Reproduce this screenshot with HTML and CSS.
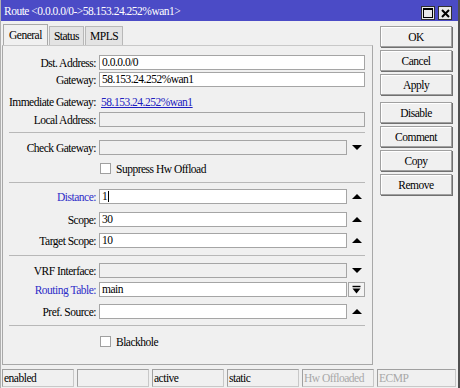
FILE: index.html
```html
<!DOCTYPE html>
<html lang="en">
<head>
  <meta charset="UTF-8" />
  <title>Route</title>
  <link rel="stylesheet" href="styles.css">
</head>
<body>
<div class="window">
  <div class="titlebar">
    <span class="title">Route &lt;0.0.0.0/0-&gt;58.153.24.252%wan1&gt;</span>
    <span class="tb-btns">
      <span class="tb-btn"><span class="max-box"></span></span>
      <span class="tb-btn close">
        <svg width="9" height="9" viewBox="0 0 9 9"><path d="M1 1L8 8M8 1L1 8" stroke="#000" stroke-width="2"/></svg>
      </span>
    </span>
  </div>

  <div class="main">
    <div class="left">
      <div class="tabs">
        <span class="tab active">General</span>
        <span class="tab">Status</span>
        <span class="tab">MPLS</span>
      </div>

      <div class="panel">
        <div class="row r-dst">
          <label>Dst. Address:</label>
          <div class="field">0.0.0.0/0</div>
        </div>
        <div class="row r-gw">
          <label>Gateway:</label>
          <div class="field">58.153.24.252%wan1</div>
        </div>
        <div class="row r-imm">
          <label>Immediate Gateway:</label>
          <a class="link">58.153.24.252%wan1</a>
        </div>
        <div class="row r-local">
          <label>Local Address:</label>
          <div class="field off"></div>
        </div>
        <div class="sep"></div>
        <div class="row r-check">
          <label>Check Gateway:</label>
          <div class="field off short"></div>
          <span class="arrow"><span class="down"></span></span>
        </div>
        <div class="row r-supp">
          <label></label>
          <span class="box"></span><span class="cb-text">Suppress Hw Offload</span>
        </div>
        <div class="sep s2"></div>
        <div class="row r-dist">
          <label class="blue">Distance:</label>
          <div class="field short">1<span class="caret"></span></div>
          <span class="arrow"><span class="up"></span></span>
        </div>
        <div class="row r-scope">
          <label>Scope:</label>
          <div class="field short">30</div>
          <span class="arrow"><span class="up"></span></span>
        </div>
        <div class="row r-target">
          <label>Target Scope:</label>
          <div class="field short">10</div>
          <span class="arrow"><span class="up"></span></span>
        </div>
        <div class="sep s3"></div>
        <div class="row r-vrf">
          <label>VRF Interface:</label>
          <div class="field off short"></div>
          <span class="arrow"><span class="down"></span></span>
        </div>
        <div class="row r-table">
          <label class="blue">Routing Table:</label>
          <div class="field short">main</div>
          <span class="drop-btn">
            <svg width="9" height="9" viewBox="0 0 9 9"><path d="M0.5 1.5H8.5" stroke="#000" stroke-width="1.4"/><path d="M0.5 3.5H8.5L4.5 8.5Z" fill="#000"/></svg>
          </span>
        </div>
        <div class="row r-pref">
          <label>Pref. Source:</label>
          <div class="field short"></div>
          <span class="arrow"><span class="up"></span></span>
        </div>
        <div class="sep s4"></div>
        <div class="row r-black">
          <label></label>
          <span class="box"></span><span class="cb-text">Blackhole</span>
        </div>
      </div>
    </div>

    <div class="buttons">
      <button>OK</button>
      <button>Cancel</button>
      <button>Apply</button>
      <button class="gap">Disable</button>
      <button>Comment</button>
      <button>Copy</button>
      <button>Remove</button>
    </div>
  </div>

  <div class="statusbar">
    <span class="cell">enabled</span>
    <span class="cell"></span>
    <span class="cell">active</span>
    <span class="cell">static</span>
    <span class="cell dim">Hw Offloaded</span>
    <span class="cell dim">ECMP</span>
  </div>
</div>
</body>
</html>
```

FILE: styles.css
```css
body {
  margin: 0;
  font-family: "Liberation Serif", "DejaVu Serif", "Times New Roman", serif;
  font-size: 11.5px;
  letter-spacing: -0.5px;
  color: #000;
}

.window {
  width: 460px;
  height: 388px;
  box-sizing: border-box;
  background: #f0f0f0;
  border-left: 1px solid #b0b0b0;
  border-right: 2px solid #505050;
  overflow: hidden;
}

.titlebar {
  height: 21px;
  background: #4b4bc6;
  display: flex;
  align-items: center;
  justify-content: space-between;
  padding: 0 6px 0 3px;
}

.title {
  color: #fff;
  font-size: 11.5px;
  letter-spacing: -0.5px;
}

.tb-btns {
  display: flex;
  gap: 3px;
  margin-top: 5px;
}

.tb-btn {
  width: 12px;
  height: 12px;
  background: #e8e8e8;
  border: 1px solid #303030;
  display: flex;
  align-items: center;
  justify-content: center;
}

.max-box {
  width: 8px;
  height: 7px;
  border: 1px solid #000;
  border-top-width: 2px;
}

.main {
  display: flex;
  height: 346px;
}

.left {
  width: 371px;
  margin-left: 1px;
}

.tabs {
  display: flex;
  gap: 1px;
  margin-top: 2px;
  height: 22px;
  align-items: flex-end;
  padding-left: 1px;
}

.tab {
  height: 19px;
  line-height: 18px;
  padding: 0 4px;
  box-sizing: border-box;
  background: #e3e3e3;
  border: 1px solid #b8b8b8;
  border-bottom: none;
}

.tab.active {
  height: 21px;
  line-height: 20px;
  padding: 0 5px;
  background: #f0f0f0;
  border-color: #a8a8a8;
}

.panel {
  height: 320px;
  box-sizing: border-box;
  border: 1px solid #a8a8a8;
  border-top-color: #c8c8c8;
  padding: 9px 7px 0 0;
}

.row {
  display: flex;
  align-items: center;
  height: 15px;
}

.row label {
  width: 93px;
  text-align: right;
  margin-right: 3px;
  flex-shrink: 0;
  white-space: nowrap;
}

.blue {
  color: #2d2dc8;
}

.field {
  flex: 1;
  height: 15px;
  box-sizing: border-box;
  background: #fff;
  border: 1px solid #a5a5a5;
  line-height: 13px;
  padding-left: 2px;
}

.field.off {
  background: #f0f0f0;
}

.field.short {
  flex: none;
  width: 248px;
}

.caret {
  display: inline-block;
  width: 1px;
  height: 11px;
  background: #000;
  vertical-align: -2px;
  margin-left: 1px;
}

.link {
  color: #2020c0;
  text-decoration: underline;
  margin-left: 2px;
}

.arrow {
  width: 18px;
  display: flex;
  justify-content: center;
  margin-left: 1px;
}

.down {
  width: 0;
  height: 0;
  border-left: 5px solid transparent;
  border-right: 5px solid transparent;
  border-top: 5px solid #000;
}

.up {
  width: 0;
  height: 0;
  border-left: 5px solid transparent;
  border-right: 5px solid transparent;
  border-bottom: 5px solid #000;
}

.drop-btn {
  width: 17px;
  height: 15px;
  box-sizing: border-box;
  margin-left: 1px;
  border: 1px solid #a5a5a5;
  background: #f4f4f4;
  display: flex;
  align-items: center;
  justify-content: center;
}

.box {
  width: 11px;
  height: 11px;
  box-sizing: border-box;
  background: #fff;
  border: 1px solid #a0a0a0;
  margin-left: 1px;
  margin-right: 5px;
}

.sep {
  height: 1px;
  background: #b8b8b8;
  margin: 5px 0 0 6px;
}

.r-gw { margin-top: 2px; }
.r-imm { margin-top: 7px; }
.r-local { margin-top: 3px; }
.r-check { margin-top: 7px; }
.r-supp { margin-top: 6px; }
.s2 { margin-top: 6px; }
.r-dist { margin-top: 6px; }
.r-scope { margin-top: 8px; }
.r-target { margin-top: 6px; }
.s3 { margin-top: 7px; }
.r-vrf { margin-top: 7px; }
.r-table { margin-top: 4px; }
.r-pref { margin-top: 7px; }
.s4 { margin-top: 6px; }
.r-black { margin-top: 8px; }

.buttons {
  display: flex;
  flex-direction: column;
  gap: 3px;
  margin: 5px 0 0 7px;
}

.buttons button {
  width: 72px;
  height: 21px;
  padding: 0;
  font-family: inherit;
  font-size: 11.5px;
  letter-spacing: -0.5px;
  background: #f0f0f0;
  border: 1px solid #a0a0a0;
  box-shadow: inset 1px 1px 0 #fff, 1px 1px 0 #707070;
  color: #000;
}

.buttons .gap {
  margin-top: 4px;
}

.statusbar {
  display: flex;
  gap: 3px;
  padding: 2px 0 0 1px;
}

.cell {
  width: 72px;
  height: 18px;
  box-sizing: border-box;
  border: 1px solid #c8c8c8;
  border-top-color: #a0a0a0;
  border-left-color: #a0a0a0;
  line-height: 16px;
  padding-left: 1px;
}

.cell:last-child {
  width: 79px;
}

.cell.dim {
  color: #a8a8a8;
}
```
